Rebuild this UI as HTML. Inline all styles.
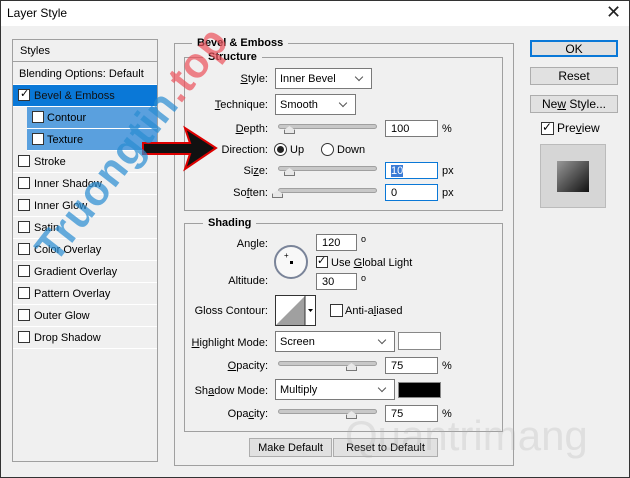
<!DOCTYPE html>
<html><head><style>
*{margin:0;padding:0;box-sizing:border-box}
body{width:630px;height:478px;overflow:hidden;background:#f0f0f0;font-family:"Liberation Sans",Tahoma,sans-serif;font-size:11px;color:#000;position:relative}
.a{position:absolute}
.frame{left:0;top:0;width:630px;height:478px;border:1px solid #333}
.tb{left:1px;top:1px;width:628px;height:25px;background:#fff}
.lbl{position:absolute;text-align:right;white-space:nowrap}
.inp{position:absolute;background:#fff;border:1px solid #7a7a7a;height:17px;padding:2px 0 0 5px;font-size:11px}
.dd{position:absolute;background:#fff;border:1px solid #7a7a7a;padding:4px 0 0 4px}
.dd:after{content:"";position:absolute;right:9px;top:5px;width:5px;height:5px;border-right:1px solid #555;border-bottom:1px solid #555;transform:rotate(45deg)}
.sl{position:absolute;height:5px;background:#c8c8c8;border:1px solid #a0a0a0;border-radius:3px}
.th{position:absolute;width:11px;height:8px;background:#e8e8e8;border:1px solid #777;border-top:none;clip-path:polygon(50% 0,100% 50%,100% 100%,0 100%,0 50%)}
.cb{position:absolute;width:12px;height:12px;border:1px solid #333;background:#fff}
.li{position:absolute;left:13px;width:144px;height:22px;border-bottom:1px solid #fff;padding:5px 0 0 21px}
.li .cb{left:5px;top:4px}
.btn{position:absolute;background:#e1e1e1;border:1px solid #adadad;text-align:center;font-size:12px}
.grp{position:absolute;border:1px solid #a0a0a0}
.gt{position:absolute;background:#f0f0f0;font-weight:bold;padding:0 5px;font-size:11px;line-height:12px}
u{text-decoration:underline}
</style></head><body>
<div class="a tb"></div>
<div class="a" style="left:7px;top:6px;font-size:12px">Layer Style</div>
<div class="a" style="left:606px;top:2px;font-size:18px;color:#222">✕</div>

<!-- left panel -->
<div class="a" style="left:12px;top:39px;width:146px;height:423px;border:1px solid #a0a0a0;background:#f0f0f0"></div>
<div class="li" style="top:40px;height:22px;padding-left:7px;border-bottom:1px solid #a0a0a0">Styles</div>
<div class="li" style="top:63px;padding-left:6px">Blending Options: Default</div>
<div class="li" style="top:85px;background:#0a78d7;color:#111;padding-left:21px">Bevel &amp; Emboss<div class="cb" style="background:#fff;border-color:#333"></div><span class="a" style="left:7px;top:2px;color:#000;font-size:11px">✓</span></div>
<div class="li" style="top:107px;left:27px;width:130px;background:#5aa0de;padding-left:20px">Contour<div class="cb"></div></div>
<div class="li" style="top:129px;left:27px;width:130px;background:#5aa0de;padding-left:20px">Texture<div class="cb"></div></div>
<div class="li" style="top:151px">Stroke<div class="cb"></div></div>
<div class="li" style="top:173px">Inner Shadow<div class="cb"></div></div>
<div class="li" style="top:195px">Inner Glow<div class="cb"></div></div>
<div class="li" style="top:217px">Satin<div class="cb"></div></div>
<div class="li" style="top:239px">Color Overlay<div class="cb"></div></div>
<div class="li" style="top:261px">Gradient Overlay<div class="cb"></div></div>
<div class="li" style="top:283px">Pattern Overlay<div class="cb"></div></div>
<div class="li" style="top:305px">Outer Glow<div class="cb"></div></div>
<div class="li" style="top:327px">Drop Shadow<div class="cb"></div></div>

<!-- main groups -->
<div class="grp" style="left:174px;top:43px;width:340px;height:423px"></div>
<div class="gt" style="left:192px;top:37px">Bevel &amp; Emboss</div>
<div class="grp" style="left:184px;top:57px;width:319px;height:154px"></div>
<div class="gt" style="left:203px;top:51px">Structure</div>

<div class="lbl" style="right:362px;top:73px"><u>S</u>tyle:</div>
<div class="dd" style="left:275px;top:68px;width:97px;height:21px">Inner Bevel</div>
<div class="lbl" style="right:362px;top:99px"><u>T</u>echnique:</div>
<div class="dd" style="left:275px;top:94px;width:81px;height:21px">Smooth</div>
<div class="lbl" style="right:362px;top:123px"><u>D</u>epth:</div>
<div class="sl" style="left:278px;top:124px;width:99px"></div><div class="th" style="left:284px;top:126px"></div>
<div class="inp" style="left:385px;top:120px;width:53px">100</div>
<div class="a" style="left:442px;top:123px">%</div>
<div class="lbl" style="right:362px;top:144px">Direction:</div>
<div class="a" style="left:274px;top:143px;width:13px;height:13px;border:1px solid #333;border-radius:50%;background:#fff"><div class="a" style="left:2px;top:2px;width:7px;height:7px;border-radius:50%;background:#222"></div></div>
<div class="a" style="left:290px;top:144px">Up</div>
<div class="a" style="left:321px;top:143px;width:13px;height:13px;border:1px solid #333;border-radius:50%;background:#fff"></div>
<div class="a" style="left:337px;top:144px">Down</div>
<div class="lbl" style="right:362px;top:165px">Si<u>z</u>e:</div>
<div class="sl" style="left:278px;top:166px;width:99px"></div><div class="th" style="left:284px;top:168px"></div>
<div class="inp" style="left:385px;top:162px;width:53px;border-color:#0a78d7"><span style="background:#3a7bd5;color:#fff">10</span></div>
<div class="a" style="left:442px;top:165px">px</div>
<div class="lbl" style="right:362px;top:187px">So<u>f</u>ten:</div>
<div class="sl" style="left:278px;top:188px;width:99px"></div><div class="th" style="left:272px;top:190px"></div>
<div class="inp" style="left:385px;top:184px;width:53px;border-color:#0a78d7">0</div>
<div class="a" style="left:442px;top:187px">px</div>

<div class="grp" style="left:184px;top:223px;width:319px;height:209px"></div>
<div class="gt" style="left:203px;top:217px">Shading</div>
<div class="lbl" style="right:362px;top:238px">An<u>g</u>le:</div>
<div class="a" style="left:274px;top:245px;width:34px;height:34px;border:2px solid #7a8499;border-radius:50%;background:#f8f8f8"><div class="a" style="left:14px;top:14px;width:3px;height:3px;background:#000"></div><div class="a" style="left:8px;top:4px;font-size:8px">+</div></div>
<div class="inp" style="left:316px;top:234px;width:41px">120</div>
<div class="a" style="left:361px;top:234px;font-size:9px">o</div>
<div class="cb" style="left:316px;top:256px"></div><span class="a" style="left:317px;top:254px;font-size:11px">✓</span>
<div class="a" style="left:331px;top:257px">Use <u>G</u>lobal Light</div>
<div class="lbl" style="right:362px;top:275px">Altitude:</div>
<div class="inp" style="left:316px;top:273px;width:41px">30</div>
<div class="a" style="left:361px;top:273px;font-size:9px">o</div>
<div class="lbl" style="right:362px;top:305px">Gloss Contour:</div>
<div class="a" style="left:275px;top:295px;width:41px;height:31px;border:1px solid #333;background:#fff">
<svg width="39" height="29" class="a" style="left:0;top:0"><polygon points="0,29 29,0 29,29" fill="#a0a0a0"/><line x1="29" y1="0" x2="29" y2="29" stroke="#333"/><polygon points="32,13 37,13 34.5,16" fill="#000"/></svg></div>
<div class="cb" style="left:330px;top:304px;width:13px;height:13px"></div>
<div class="a" style="left:345px;top:305px">Anti-a<u>l</u>iased</div>
<div class="lbl" style="right:362px;top:337px"><u>H</u>ighlight Mode:</div>
<div class="dd" style="left:275px;top:331px;width:120px;height:21px">Screen</div>
<div class="a" style="left:398px;top:332px;width:43px;height:18px;border:1px solid #888;background:#fff"></div>
<div class="lbl" style="right:362px;top:360px"><u>O</u>pacity:</div>
<div class="sl" style="left:278px;top:361px;width:99px"></div><div class="th" style="left:346px;top:363px"></div>
<div class="inp" style="left:385px;top:357px;width:53px">75</div>
<div class="a" style="left:442px;top:360px">%</div>
<div class="lbl" style="right:362px;top:385px">Sh<u>a</u>dow Mode:</div>
<div class="dd" style="left:275px;top:379px;width:120px;height:21px">Multiply</div>
<div class="a" style="left:398px;top:382px;width:43px;height:16px;border:1px solid #888;background:#000"></div>
<div class="lbl" style="right:362px;top:408px">Opa<u>c</u>ity:</div>
<div class="sl" style="left:278px;top:409px;width:99px"></div><div class="th" style="left:346px;top:411px"></div>
<div class="inp" style="left:385px;top:405px;width:53px">75</div>
<div class="a" style="left:442px;top:408px">%</div>

<div class="btn" style="left:249px;top:438px;width:83px;height:19px;padding-top:3px;font-size:11px">Make Default</div>
<div class="btn" style="left:333px;top:438px;width:105px;height:19px;padding-top:3px;font-size:11px">Reset to Default</div>

<!-- right -->
<div class="btn" style="left:530px;top:40px;width:88px;height:17px;border:2px solid #0a78d7;padding-top:0">OK</div>
<div class="btn" style="left:530px;top:67px;width:88px;height:18px;padding-top:1px">Reset</div>
<div class="btn" style="left:530px;top:95px;width:88px;height:18px;padding-top:1px">Ne<u>w</u> Style...</div>
<div class="cb" style="left:541px;top:122px;width:13px;height:13px"></div><span class="a" style="left:542px;top:120px;font-size:12px">✓</span>
<div class="a" style="left:557px;top:121px;font-size:12px">Pre<u>v</u>iew</div>
<div class="a" style="left:540px;top:144px;width:66px;height:64px;border:1px solid #bbb;background:#d6d6d6"></div>
<div class="a" style="left:557px;top:161px;width:32px;height:31px;background:linear-gradient(135deg,#999,#555 50%,#111)"></div>

<!-- watermark arrow -->
<svg class="a" style="left:140px;top:124px" width="80" height="50"><polygon points="3,19 50,19 45,4 76,24 45,45 50,30 3,30" fill="#111" stroke="#d00" stroke-width="2"/></svg>
<div class="a" style="left:-10px;top:120px;transform:rotate(-52deg);font-size:42px;font-weight:bold;color:rgba(40,140,210,.7);white-space:nowrap;letter-spacing:1px">Truongtin<span style="color:rgba(235,80,90,.7)">.top</span></div>
<div class="a" style="left:345px;top:412px;font-size:42px;color:rgba(170,170,170,.25);white-space:nowrap">Quantrimang</div>
<div class="a frame"></div>
</body></html>
